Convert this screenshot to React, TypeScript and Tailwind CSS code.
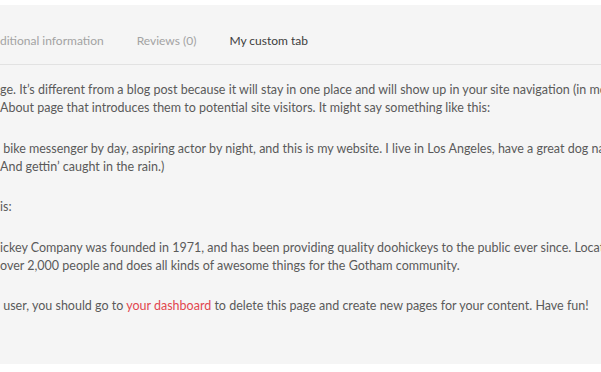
const PARAGRAPHS: string[][] = [
  [
    'ge. It’s different from a blog post because it will stay in one place and will show up in your site navigation (in most themes).',
    'About page that introduces them to potential site visitors. It might say something like this:',
  ],
  [
    ' bike messenger by day, aspiring actor by night, and this is my website. I live in Los Angeles, have a great dog named Jack,',
    'And gettin’ caught in the rain.)',
  ],
  ['is:'],
  [
    'ickey Company was founded in 1971, and has been providing quality doohickeys to the public ever since. Located in Gotham City,',
    'over 2,000 people and does all kinds of awesome things for the Gotham community.',
  ],
];

export default function App() {
  return (
    <div className="w-[601px] h-[372px] overflow-hidden bg-white pt-[5px] font-['Lato',sans-serif]">
      <section className="h-[359px] bg-[#f5f5f5] overflow-hidden">
        <div className="flex h-[60px] items-start gap-[33px] border-b border-[#e2e2e2] pt-[27px] leading-[18px] whitespace-nowrap text-[12px]">
          <span className="text-[#a3a3a3]">ditional information</span>
          <span className="text-[#a3a3a3]">Reviews (0)</span>
          <span className="text-[#3d3d3d]">My custom tab</span>
        </div>
        <div className="pt-[16px] text-[12.5px] text-[#5a5a5a] leading-[18px] whitespace-pre">
          {PARAGRAPHS.map((lines, i) => (
            <p key={i} className="mb-[22.5px]">
              {lines.map((line, j) => (
                <span key={j} className="block">
                  {line}
                </span>
              ))}
            </p>
          ))}
          <p>
            {' user, you should go to '}
            <a className="text-[#e2474f]">your dashboard</a>
            {' to delete this page and create new pages for your content. Have fun!'}
          </p>
        </div>
      </section>
    </div>
  );
}
